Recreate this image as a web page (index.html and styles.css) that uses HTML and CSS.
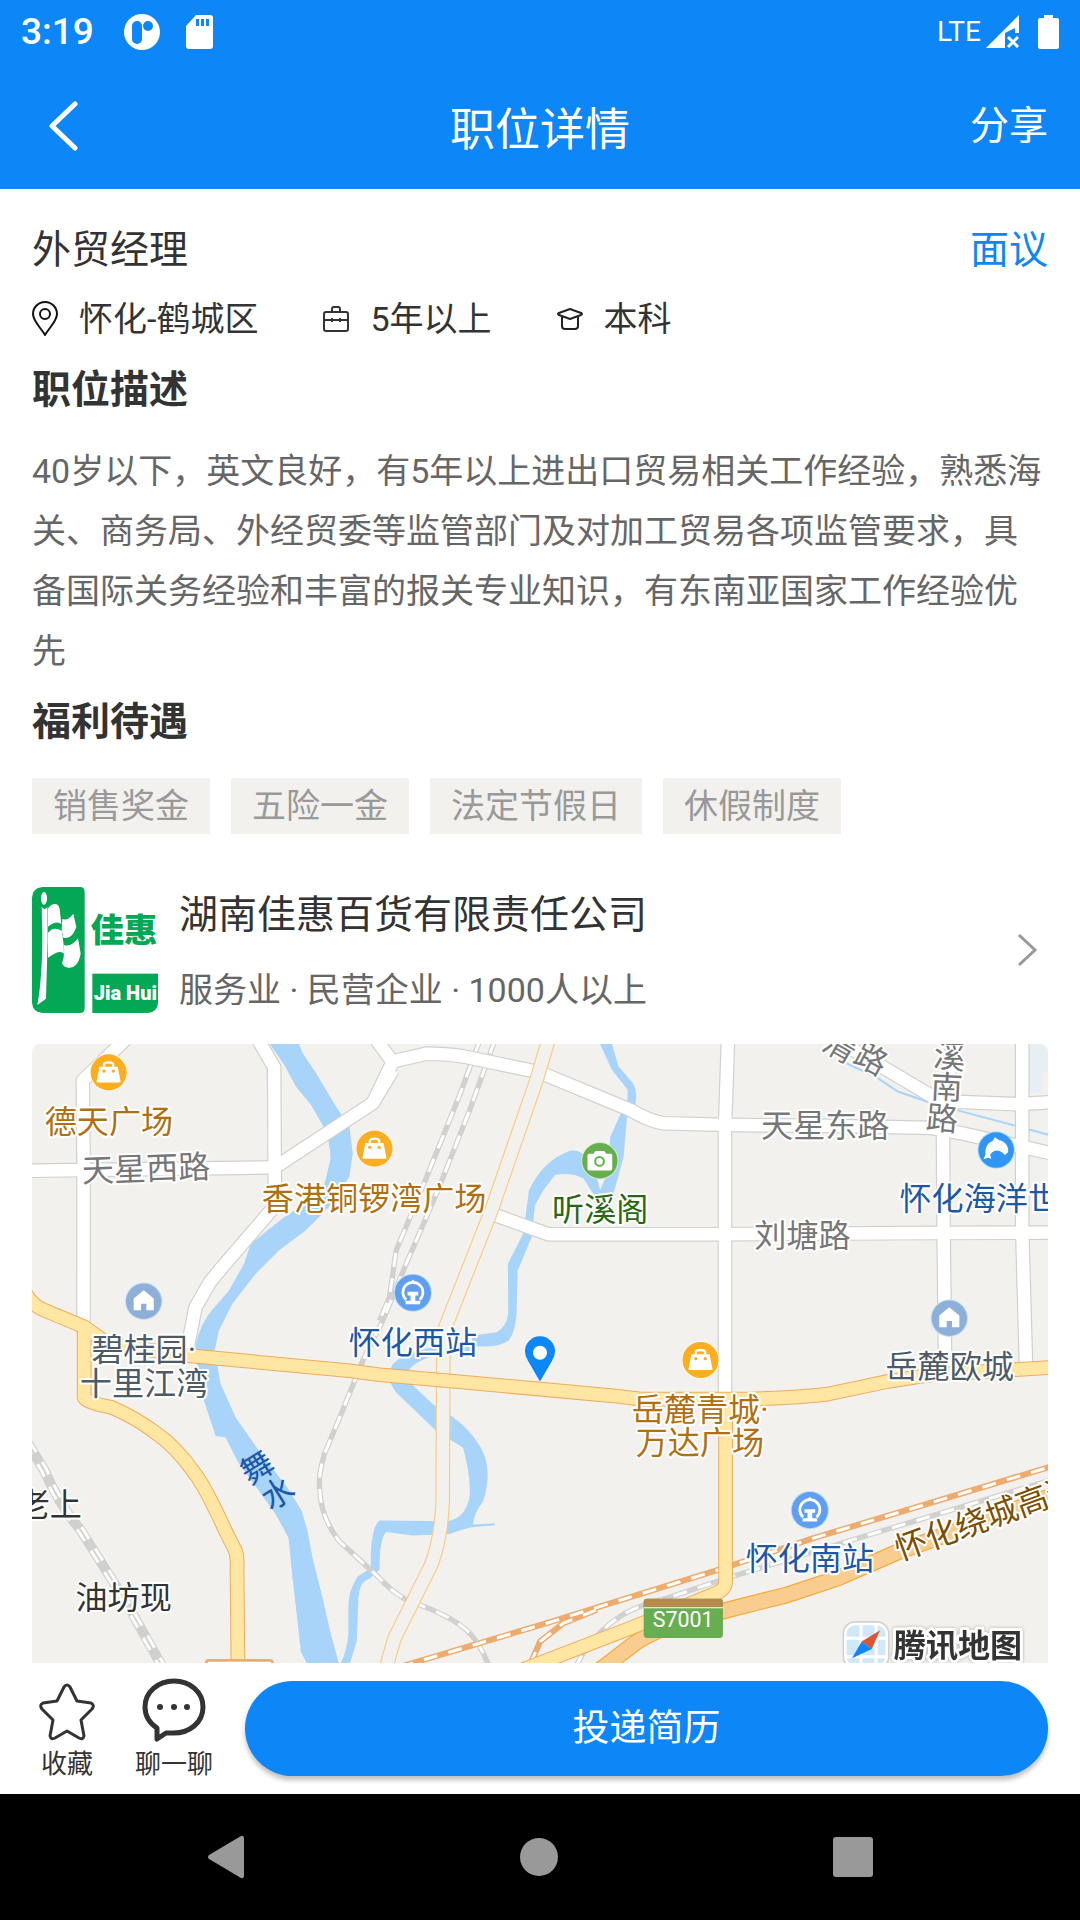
FILE: index.html
```html
<!DOCTYPE html>
<html lang="zh-CN">
<head>
  <meta charset="UTF-8">
  <meta name="viewport" content="width=device-width, initial-scale=1.0">
  <title>职位详情</title>
  <link rel="stylesheet" href="styles.css">
</head>
<body>

  <div class="status-bar">
    <span class="clock">3:19</span>
    <svg class="status-app" width="36" height="36" viewBox="0 0 36 36">
      <circle cx="18" cy="18" r="18" fill="#fff"/>
      <rect x="8" y="7" width="10" height="23" rx="5" fill="#0d86f8"/>
      <circle cx="24" cy="12" r="5" fill="#0d86f8"/>
    </svg>
    <svg class="status-sd" width="27" height="34" viewBox="0 0 27 34">
      <path d="M10 0h14a3 3 0 0 1 3 3v28a3 3 0 0 1-3 3H3a3 3 0 0 1-3-3V11z" fill="#fff"/>
      <path d="M10 4h3v7h-3zM15 4h3v7h-3zM20 4h3v7h-3z" fill="#0d86f8"/>
    </svg>
    <span class="network">LTE</span>
    <svg class="status-signal" width="34" height="33" viewBox="0 0 34 33">
      <path d="M33 0v18h-4v-5l-10 5v15H0z" fill="#fff"/>
      <path d="M22 22l10 10M32 22L22 32" stroke="#fff" stroke-width="3"/>
    </svg>
    <svg class="status-battery" width="21" height="34" viewBox="0 0 21 34">
      <path d="M6 0h9v3h4a2 2 0 0 1 2 2v27a2 2 0 0 1-2 2H2a2 2 0 0 1-2-2V5a2 2 0 0 1 2-2h4z" fill="#fff"/>
    </svg>
  </div>

  <header class="title-bar">
    <button type="button" class="back-button" aria-label="返回">
      <svg width="30" height="50" viewBox="0 0 30 50">
        <path d="M27 3L4 25l23 22" fill="none" stroke="#fff" stroke-width="5" stroke-linecap="round" stroke-linejoin="round"/>
      </svg>
    </button>
    <h1>职位详情</h1>
    <button type="button" class="share-button">分享</button>
  </header>

  <main>
    <div class="job-title">
      <h2>外贸经理</h2>
      <span class="salary">面议</span>
    </div>

    <ul class="job-info">
      <li>
        <svg width="26" height="36" viewBox="0 0 26 36" fill="none" stroke="#111" stroke-width="2">
          <path d="M13 34C9 27 1 20 1 13a12 12 0 0 1 24 0c0 7-8 14-12 21z" stroke-linejoin="round"/>
          <circle cx="13" cy="13" r="5"/>
        </svg>
        怀化-鹤城区
      </li>
      <li>
        <svg width="26" height="26" viewBox="0 0 26 26" fill="none" stroke="#333" stroke-width="2">
          <rect x="1" y="6" width="24" height="19" rx="2"/>
          <path d="M9 6V3a2 2 0 0 1 2-2h4a2 2 0 0 1 2 2v3M1 14h24M9 12v4M17 12v4"/>
        </svg>
        5年以上
      </li>
      <li>
        <svg width="26" height="22" viewBox="0 0 26 22" fill="none" stroke="#222" stroke-width="2" stroke-linejoin="round">
          <path d="M13 1l11 4q2 1 0 2l-11 4L2 7Q0 6 2 5z"/>
          <path d="M5 9v9q0 3 3 3h10q3 0 3-3V9"/>
        </svg>
        本科
      </li>
    </ul>

    <h3>职位描述</h3>
    <p class="description">40岁以下，英文良好，有5年以上进出口贸易相关工作经验，熟悉海关、商务局、外经贸委等监管部门及对加工贸易各项监管要求，具备国际关务经验和丰富的报关专业知识，有东南亚国家工作经验优先</p>

    <h3>福利待遇</h3>
    <ul class="tags">
      <li>销售奖金</li>
      <li>五险一金</li>
      <li>法定节假日</li>
      <li>休假制度</li>
    </ul>

    <a href="#company" class="company">
      <svg class="company-logo" width="126" height="126" viewBox="12 12 378 378">
        <path d="M44 12h112q14 0 14 16v346q0 16-14 16H44q-32 0-32-32V44q0-32 32-32z" fill="#04a753"/>
        <ellipse cx="48" cy="46" rx="9" ry="19" fill="#fff"/>
        <path d="M41 72l8 7 9-6 1 100-5 174-26 19c12-60 15-150 15-210z" fill="#fff"/>
        <path d="M59 78q10-16 24-15 12 2 13 24l4 36q-14-12-40 8zM103 108q18 6 33-16l9 40q-14 40-39 32l-5-26z" fill="#fff"/>
        <path d="M60 150q16-22 42-6l5 42 1 26q-12-14-48 12zM108 186q20 8 42-20l8 46q-8 44-38 42-14-2-18-14 8-18 6-54z" fill="#fff"/>
        <rect x="193" y="272" width="197" height="118" fill="#04a753"/>
        <text class="logo-name" x="288" y="176">佳惠</text>
        <text class="logo-latin" x="292" y="352">Jia Hui</text>
      </svg>
      <div class="company-text">
        <h2>湖南佳惠百货有限责任公司</h2>
        <p>服务业 · 民营企业 · 1000人以上</p>
      </div>
      <svg width="22" height="34" viewBox="0 0 22 34">
        <path d="M3 2l16 15L3 32" fill="none" stroke="#999" stroke-width="3"/>
      </svg>
    </a>

    <div class="map" id="company">
      <svg class="map-canvas" viewBox="3 3 3054 1851" preserveAspectRatio="xMidYMin slice">
        <defs>
          <g id="roads">
            <path d="M290-10L163 112L165 370V865"/>
            <path d="M0 382L735 372"/>
            <path d="M688-8L735 72L737 430L735 490L580 670L543 715L500 790L478 900L475 940"/>
            <path d="M737 372L1030 180L1090 55L1190 32Q1250 32 1300 40L1530 88L1800 200Q1860 235 1900 240L2083 245L2400 248L2700 254L2800 272L3060 330"/>
            <path d="M1088 55L1040-10"/>
            <path d="M1030 180L1090 80"/>
            <path d="M1397 515L1555 572H2060L2700 568L3060 567"/>
            <path d="M2092-8L2083 260V1050"/>
            <path d="M2765-8L2735 260L2737 570L2742 1010"/>
            <path d="M2972-8V560L2984 990"/>
            <path d="M2400-20L2560 75L2700 158L2780 176L2960 183L3060 177"/>
          </g>
          <path id="expressway" d="M1555-8L1520 110L1385 500L1247 850L1241 930L1239 1370Q1235 1480 1205 1560L1150 1670L1095 1780L1072 1860"/>
          <g id="main-roads">
            <path d="M-10 745Q10 785 50 800L165 848L240 900L480 935L960 980L1050 992L1220 1007L1750 1055L1830 1065H2100Q2280 1064 2390 1050L2570 1012L2700 992L3060 970"/>
            <path d="M167 850V1060Q170 1074 250 1090Q320 1120 380 1165Q440 1205 500 1290Q530 1330 590 1460L620 1520Q626 1540 624 1580L627 1870"/>
            <path d="M2085 1062V1610Q2085 1636 2050 1648L1800 1750L1450 1885"/>
          </g>
          <path id="highway" d="M1690 1890L1820 1790Q1880 1755 1920 1742L2100 1693L2270 1650L2420 1600L2600 1522L2800 1450L3060 1355"/>
          <g id="rails">
            <path d="M1350-8L1288 160L1175 440L1100 620L1080 760L1050 830"/>
            <path d="M1395-8L1320 200L1225 440L1130 660L1060 830L1000 950L935 1110L885 1230Q865 1300 872 1340Q875 1420 930 1490L1050 1600Q1090 1645 1140 1670Q1250 1705 1310 1755Q1350 1790 1380 1870"/>
            <path d="M-12 1195L40 1280Q90 1390 150 1460L280 1665L395 1870"/>
            <path d="M2 1188L54 1274Q100 1380 162 1452L292 1657L407 1862"/>
            <path d="M1635 1870Q1680 1770 1780 1708Q1830 1680 1910 1660L2090 1600L2500 1475L3060 1306"/>
          </g>
          <g id="fast-rails">
            <path d="M1110 1866L1550 1735L1790 1660L2065 1575L2350 1480L3060 1266"/>
            <path d="M1500 1860L1530 1790L1600 1735L1700 1695"/>
          </g>
          <g id="shopping">
            <circle r="56" fill="#fff"/>
            <circle r="54" fill="#fdae20"/>
            <path d="M-27-17H27L36 27Q36 30 33 30H-33Q-36 30-36 27z" fill="#fff"/>
            <path d="M-14-17V-24Q-12-30 0-30T14-24V-17" fill="none" stroke="#fff" stroke-width="7"/>
            <circle cx="-14" cy="-4" r="5" fill="#fdae20"/>
            <circle cx="14" cy="-4" r="5" fill="#fdae20"/>
          </g>
          <g id="home">
            <circle r="56" fill="#c3e2f6"/>
            <circle r="53" fill="#8eafd8"/>
            <path d="M0-33L30-8V27H8V8H-8V27H-30V-8z" fill="#fff"/>
          </g>
          <g id="station">
            <circle r="57" fill="#b6ddfa"/>
            <circle r="54" fill="#609ff0"/>
            <path d="M-20 21A30 30 0 1 1 20 21" fill="none" stroke="#fff" stroke-width="8"/>
            <path d="M-8-31L0-40L8-31zM-16-3H16V8H7V24H22V34H-22V24H-7V8H-16z" fill="#fff"/>
          </g>
        </defs>

        <rect class="land" x="0" y="0" width="3060" height="1860"/>
        <path d="M2990 0H3060V85H3030V150H2990z" fill="#e7eff3"/>

        <!-- rivers -->
        <path class="river" d="M720 0L765 65L800 130L845 185L880 245Q905 300 903 350L885 425L840 470L760 525L665 600L645 660L600 740L540 810Q500 870 497 930L525 1070L560 1175L590 1180L625 1250L690 1340L740 1410L778 1480L790 1600L805 1730L815 1820L835 1860H930L905 1770L880 1660L850 1540L835 1460L818 1400L775 1330L690 1220L620 1120L575 1020L557 920L570 860L610 780L680 690L750 620L830 560L900 490L960 400L970 330L960 250L920 190L860 90L820 30L808 0z"/>
        <path class="river" d="M1708 0H1744L1765 70L1808 120Q1825 150 1812 195L1790 225L1780 340L1750 450L1690 452L1660 405Q1620 385 1575 395L1540 440L1515 485L1505 580L1470 665L1463 680L1460 810Q1455 870 1435 890Q1400 915 1320 905L1330 875L1400 865Q1430 850 1435 810L1434 660L1480 570L1497 440Q1540 350 1620 322Q1680 312 1710 440L1735 380L1740 280L1770 215L1792 180V140L1745 80z"/>
        <path class="river" d="M1330 905Q1150 900 1090 960Q1065 1000 1100 1045L1220 1160L1300 1210Q1325 1300 1319 1360Q1305 1425 1250 1430L1050 1428Q1022 1450 1024 1570L985 1595Q955 1640 957 1690V1770Q950 1830 930 1860H960L982 1790L987 1660Q990 1610 1020 1602L1050 1575Q1050 1480 1070 1462L1150 1473L1260 1468Q1310 1450 1325 1448L1395 1442V1436L1330 1440Q1330 1410 1360 1370Q1395 1260 1340 1190Q1300 1130 1210 1080L1125 1000Q1150 925 1330 920z"/>
        <path class="stream" d="M2425 35L2435 55L2540 105L2600 145L2695 178L2785 203L2950 247L3060 277"/>

        <use href="#rails" class="rail-line"/>
        <use href="#rails" class="rail-dash"/>
        <use href="#fast-rails" class="fast-rail-line"/>
        <use href="#fast-rails" class="rail-dash"/>
        <use href="#roads" class="road-edge"/>
        <use href="#roads" class="road-fill"/>
        <use href="#expressway" class="expressway-edge"/>
        <use href="#expressway" class="expressway-fill"/>
        <use href="#highway" class="highway-edge"/>
        <use href="#highway" class="highway-fill"/>
        <use href="#main-roads" class="main-road-edge"/>
        <use href="#main-roads" class="main-road-fill"/>
        <rect x="532" y="1846" width="198" height="40" rx="8" fill="#fff" stroke="#eeab6e" stroke-width="8"/>

        <!-- road names -->
        <g class="label road-label">
          <text x="353" y="410" transform="rotate(-2 353 410)">天星西路</text>
          <text x="2383" y="281">天星东路</text>
          <text x="2315" y="611">刘塘路</text>
          <text x="2428" y="45" transform="rotate(30 2428 10)">清</text>
          <text x="2520" y="82" transform="rotate(28 2520 47)">路</text>
          <text x="2755" y="75" transform="rotate(6 2755 40)">溪</text>
          <text x="2746" y="167" transform="rotate(3 2746 132)">南</text>
          <text x="2733" y="260" transform="rotate(5 2733 225)">路</text>
        </g>
        <text class="label highway-label" x="2592" y="1535" transform="rotate(-20 2640 1500)">怀化绕城高速</text>
        <g class="label water-label">
          <text x="683" y="1304" transform="rotate(-32 683 1268)">舞</text>
          <text x="745" y="1381" transform="rotate(-32 745 1345)">水</text>
        </g>

        <!-- places -->
        <g class="label shop-label">
          <text x="241" y="268">德天广场</text>
          <text x="1034" y="498">香港铜锣湾广场</text>
          <text x="2009" y="1131">岳麓青城·</text>
          <text x="2008" y="1229">万达广场</text>
        </g>
        <g class="label home-label">
          <text x="345" y="952">碧桂园·</text>
          <text x="346" y="1053">十里江湾</text>
          <text x="2755" y="1001">岳麓欧城</text>
        </g>
        <g class="label village-label">
          <text x="64" y="1415">老上</text>
          <text x="285" y="1693">油坊现</text>
        </g>
        <g class="label blue-label">
          <text x="1150" y="929">怀化西站</text>
          <text x="2337" y="1577">怀化南站</text>
          <text x="2845" y="500">怀化海洋世</text>
        </g>
        <text class="label park-label" x="1710" y="533">听溪阁</text>

        <use href="#shopping" x="240" y="88"/>
        <use href="#shopping" x="1035" y="316"/>
        <use href="#shopping" x="2010" y="948"/>
        <use href="#home" x="345" y="772"/>
        <use href="#home" x="2754" y="823"/>
        <use href="#station" x="1150" y="747"/>
        <use href="#station" x="2337" y="1397"/>
        <circle cx="1709" cy="352" r="56" fill="#d4ecc8"/>
        <circle cx="1709" cy="352" r="53" fill="#67ae50"/>
        <path d="M1677 331H1690L1696 323H1722L1728 331H1741Q1746 331 1746 336V376Q1746 381 1741 381H1677Q1672 381 1672 376V336Q1672 331 1677 331z" fill="#fff"/>
        <circle cx="1708" cy="354" r="13" fill="none" stroke="#67ae50" stroke-width="6"/>
        <circle cx="2894" cy="320" r="56" fill="#b6ddfa"/>
        <circle cx="2894" cy="320" r="53" fill="#2f96f6"/>
        <path d="M2862 334C2860 306 2874 296 2884 293L2890 282L2903 291C2922 294 2932 310 2930 326L2920 336C2912 322 2890 312 2876 334L2880 346L2870 343L2856 348z" fill="#fff"/>

        <rect x="1840" y="1662" width="237" height="117" rx="10" fill="#68ad50"/>
        <path d="M1840 1688V1672Q1840 1662 1850 1662H2067Q2077 1662 2077 1672V1688z" fill="#b58c4c"/>
        <path d="M1840 1689H2077" stroke="#fff" stroke-width="3"/>
        <text class="route-number" x="1958" y="1746">S7001</text>

        <path d="M1530 1012L1494 950Q1485 935 1485 922A45 45 0 0 1 1575 922Q1575 935 1566 950z" fill="#0d86f8"/>
        <circle cx="1530" cy="926" r="21" fill="#fff"/>

        <!-- map provider -->
        <rect x="2437" y="1731" width="136" height="140" rx="36" fill="#fff" stroke="#d2d2cf" stroke-width="5"/>
        <rect x="2447" y="1741" width="116" height="120" rx="26" fill="#d0e8f7"/>
        <path d="M2445 1780H2565M2445 1835H2565M2490 1740V1870M2535 1740V1870" stroke="#fff" stroke-width="9"/>
        <path d="M2547 1756L2492 1790L2522 1812z" fill="#dc5536"/>
        <path d="M2463 1840L2492 1790L2522 1812z" fill="#0d86f8"/>
        <text class="brand" x="2780" y="1837">腾讯地图</text>
      </svg>
    </div>
  </main>

  <footer class="action-bar">
    <button type="button" class="action">
      <svg width="56" height="64" viewBox="0 -5 56 64">
        <path d="M25 4q3-4 6 0l7 14 14 2q4 2 1 6L42 37l3 16q-1 4-5 2l-12-7-12 7q-4 2-5-2l3-16L3 26q-3-4 1-6l14-2z" fill="none" stroke="#333" stroke-width="3" stroke-linejoin="round"/>
      </svg>
      收藏
    </button>
    <button type="button" class="action">
      <svg width="64" height="64" viewBox="0 0 64 64">
        <path d="M15 61V50Q3 42 3 29C3 14 16 3 32 3s29 11 29 26-13 27-32 26l-5 0z" fill="none" stroke="#333" stroke-width="5" stroke-linejoin="round"/>
        <circle cx="18" cy="29" r="3" fill="#333"/>
        <circle cx="32" cy="29" r="3" fill="#333"/>
        <circle cx="45" cy="29" r="3" fill="#333"/>
      </svg>
      聊一聊
    </button>
    <button type="button" class="apply-button">投递简历</button>
  </footer>

  <nav class="system-nav">
    <button type="button" aria-label="后退">
      <svg width="38" height="44" viewBox="0 0 38 44">
        <path d="M34 1q3-1 3 3v36q0 4-3 3L2 24q-2-2 0-4z" fill="#999"/>
      </svg>
    </button>
    <button type="button" aria-label="主屏幕">
      <svg width="38" height="38" viewBox="0 0 38 38">
        <circle cx="19" cy="19" r="19" fill="#999"/>
      </svg>
    </button>
    <button type="button" aria-label="最近任务">
      <svg width="40" height="40" viewBox="0 0 40 40">
        <rect width="40" height="40" rx="3" fill="#999"/>
      </svg>
    </button>
  </nav>

</body>
</html>
```
FILE: styles.css
```css
/* Global Styles */
* {
    box-sizing: border-box;
}

body {
    display: flex;
    flex-direction: column;
    height: 100vh;
    margin: 0;
    background-color: #fff;
    color: #333;
    font-family: Roboto, "Noto Sans CJK SC", sans-serif;
    font-size: 34px;
    line-height: 60px;
}

h1, h2, h3, p, ul {
    margin: 0;
    padding: 0;
    font-weight: normal;
}

ul {
    list-style: none;
}

button {
    padding: 0;
    border: none;
    background: none;
    color: inherit;
    font-family: inherit;
    line-height: inherit;
    cursor: pointer;
}

svg {
    display: block;
    flex-shrink: 0;
}

/* Status Bar */
.status-bar {
    display: flex;
    align-items: center;
    height: 63px;
    padding: 0 21px;
    background-color: #0d86f8;
    color: #fff;
}

.clock {
    font-size: 37px;
    font-weight: 500;
}

.status-app {
    margin-left: 30px;
}

.status-sd {
    margin-left: 26px;
}

.network {
    margin-left: auto;
    font-size: 28px;
}

.status-signal {
    margin-left: 5px;
}

.status-battery {
    margin-left: 18px;
}

/* Title Bar */
.title-bar {
    display: grid;
    grid-template-columns: 1fr auto 1fr;
    align-items: center;
    height: 126px;
    padding: 0 32px;
    background-color: #0d86f8;
    color: #fff;
}

.title-bar h1 {
    font-size: 45px;
    line-height: normal;
}

.back-button {
    justify-self: start;
    padding: 0 16px;
}

.share-button {
    justify-self: end;
    font-size: 39px;
}

/* Content */
main {
    display: flex;
    flex: 1;
    flex-direction: column;
    min-height: 0;
    padding: 31px 32px 0;
}

h2, h3 {
    font-size: 39px;
}

h3 {
    margin-top: 11px;
    font-weight: bold;
}

.job-title {
    display: flex;
    justify-content: space-between;
}

.salary {
    color: #0d86f8;
    font-size: 39px;
}

.job-info {
    display: flex;
    gap: 65px;
    margin-top: 9px;
}

.job-info li {
    display: flex;
    align-items: center;
    gap: 21px;
}

.description {
    margin-top: 21px;
    color: #666;
}

.tags {
    display: flex;
    flex-wrap: wrap;
    gap: 21px;
    margin-top: 26px;
}

.tags li {
    padding: 0 21px;
    background-color: #f2f1ee;
    color: #999;
    line-height: 56px;
}

/* Company */
.company {
    display: flex;
    align-items: center;
    gap: 21px;
    margin-top: 45px;
    padding-right: 10px;
    color: inherit;
    text-decoration: none;
}

.company-logo {
    border-radius: 10px;
}

.logo-name, .logo-latin {
    font-weight: 900;
    text-anchor: middle;
}

.logo-name {
    fill: #04a753;
    font-size: 100px;
}

.logo-latin {
    fill: #fff;
    font-size: 60px;
}

.company-text {
    flex: 1;
    padding-top: 6px;
}

.company-text p {
    margin-top: 15px;
    color: #666;
}

/* Map */
.map {
    flex: 1;
    min-height: 0;
    margin-top: 24px;
    overflow: hidden;
    border-radius: 8px 8px 0 0;
}

.map-canvas {
    width: 100%;
    height: 100%;
}

.map-canvas use {
    stroke-linejoin: round;
}

.land {
    fill: #f2f1ee;
}

.river {
    fill: #a7d4f8;
}

.stream {
    fill: none;
    stroke: #a7d4f8;
    stroke-width: 6;
}

.road-edge {
    fill: none;
    stroke: #d0d0ce;
    stroke-width: 44;
}

.road-fill {
    fill: none;
    stroke: #fff;
    stroke-width: 37;
}

.main-road-edge {
    fill: none;
    stroke: #f0ab5c;
    stroke-width: 44;
}

.main-road-fill {
    fill: none;
    stroke: #ffe6a3;
    stroke-width: 38;
}

.highway-edge {
    fill: none;
    stroke: #f7a935;
    stroke-width: 50;
}

.highway-fill {
    fill: none;
    stroke: #f9cd90;
    stroke-width: 43;
}

.expressway-edge {
    fill: none;
    stroke: #fbcb85;
    stroke-width: 44;
}

.expressway-fill {
    fill: none;
    stroke: #f2f1ee;
    stroke-width: 37;
}

.rail-line {
    fill: none;
    stroke: #d0d0cf;
    stroke-width: 16;
}

.fast-rail-line {
    fill: none;
    stroke: #eeab6e;
    stroke-width: 18;
}

.rail-dash {
    fill: none;
    stroke: #fff;
    stroke-width: 9;
    stroke-dasharray: 42 34;
}

.label {
    font-size: 96px;
    text-anchor: middle;
    paint-order: stroke;
    stroke: #fff;
    stroke-width: 12;
    stroke-linejoin: round;
}

.road-label {
    fill: #777;
}

.highway-label {
    fill: #7a5000;
    text-anchor: start;
}

.water-label {
    fill: #1d57a8;
    font-size: 96px;
    stroke: none;
}

.shop-label {
    fill: #b07010;
}

.home-label {
    fill: #4d5b66;
}

.village-label {
    fill: #333;
}

.blue-label {
    fill: #1d57a8;
}

.park-label {
    fill: #2b6713;
}

.route-number {
    fill: #fff;
    font-size: 64px;
    text-anchor: middle;
}

.brand {
    fill: #333;
    font-size: 96px;
    font-weight: bold;
    text-anchor: middle;
    paint-order: stroke;
    stroke: #fff;
    stroke-width: 18;
    stroke-linejoin: round;
    filter: drop-shadow(0 0 4px #aaa);
}

/* Action Bar */
.action-bar {
    display: flex;
    align-items: center;
    height: 131px;
    padding: 0 32px 0 39px;
}

.action {
    display: flex;
    flex-direction: column;
    align-items: center;
    justify-content: flex-end;
    gap: 4px;
    height: 106px;
    color: #333;
    font-size: 26px;
    line-height: 36px;
}

.action + .action {
    margin-left: 40px;
}

.apply-button {
    flex: 1;
    height: 95px;
    margin-left: 32px;
    border-radius: 48px;
    background-color: #0d86f8;
    box-shadow: 0 4px 5px rgba(0, 0, 0, 0.25);
    color: #fff;
    font-size: 37px;
}

/* System Navigation */
.system-nav {
    display: flex;
    align-items: center;
    justify-content: space-around;
    height: 126px;
    padding: 0 70px;
    background-color: #000;
}
```
